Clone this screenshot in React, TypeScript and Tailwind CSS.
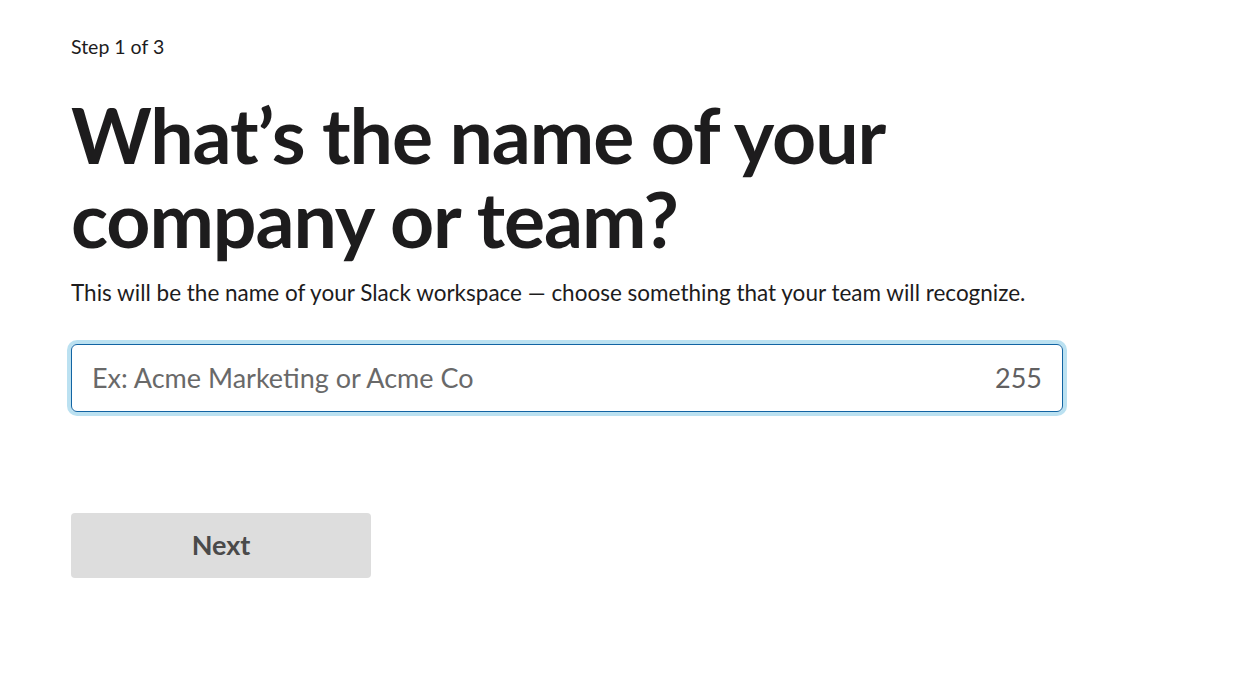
import React, { useState } from "react";

const App: React.FC = () => {
  const [name, setName] = useState("");

  return (
    <div className="min-h-screen bg-white font-['Lato','Liberation_Sans',sans-serif] text-[#1d1c1d]">
      <div className="pl-[71px] pt-[35px]">
        <p className="text-[19.5px] leading-[24px]">Step 1 of 3</p>

        <h1 className="mt-[33px] w-[900px] text-[77px] font-bold leading-[84px] tracking-[-1.1px] text-[#1d1c1d]">
          What’s the name of your company or team?
        </h1>

        <p className="mt-[18px] text-[22.5px] leading-[30px]">
          This will be the name of your Slack workspace — choose something that your team will recognize.
        </p>

        <div className="mt-[36px] flex h-[68px] w-[992px] items-center rounded-[6px] border border-[#1264a3] pl-[20px] pr-[20px] shadow-[0_0_0_4px_rgba(29,155,209,0.3)]">
          <input
            value={name}
            onChange={(e) => setName(e.target.value)}
            placeholder="Ex: Acme Marketing or Acme Co"
            className="flex-1 bg-transparent text-[27px] text-[#1d1c1d] outline-none placeholder:text-[#696969]"
          />
          <span className="text-[27px] text-[#616061]">{255 - name.length}</span>
        </div>

        <button className="mt-[101px] h-[65px] w-[300px] rounded-[4px] bg-[#dddddd] text-[27px] font-bold text-[#4a4a4a]">
          Next
        </button>
      </div>
    </div>
  );
};

export default App;
